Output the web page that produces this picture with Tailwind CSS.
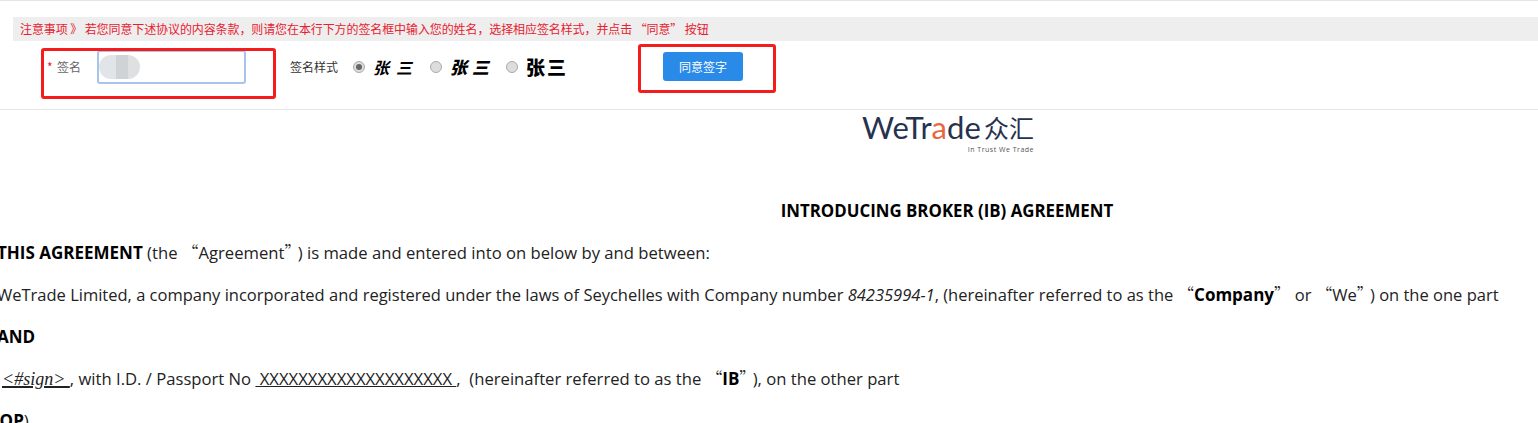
<!DOCTYPE html>
<html lang="zh-CN" class="overflow-hidden h-[423px]">
<head>
  <meta charset="UTF-8">
  <title>IB Agreement</title>
  <script src="https://cdn.jsdelivr.net/npm/@tailwindcss/browser@4"></script>
</head>
<body class="bg-white overflow-hidden h-[423px] font-['Open_Sans','Noto_Sans_CJK_SC',sans-serif]">
  <!-- sign bar -->
  <div class="relative h-[110px] border-t border-b border-[#e6e6e6] pt-4 font-['Noto_Sans_CJK_SC',sans-serif]">
    <div class="ml-[13px] h-6 bg-[#eeeeee] pl-[7px] text-[12px] tracking-[-0.1px] leading-6 text-[#e8202e]">注意事项 》 若您同意下述协议的内容条款，则请您在本行下方的签名框中输入您的姓名，选择相应签名样式，并点击 “同意” 按钮</div>
    <div class="flex items-center h-[52px] pl-[47px] text-[12px] text-[#666]">
      <span class="w-[10px] text-[#e8202e]">*</span>
      <span class="w-[40px]">签名</span>
      <div class="relative w-[149px] h-[34px] border-2 border-[#a9c4ec] rounded-[3px] bg-white">
        <div class="absolute left-0 top-[3px] flex w-[41px] h-6 rounded-full overflow-hidden blur-[0.5px]">
          <span class="w-[17px] bg-[#e2e5e8]"></span>
          <span class="w-[12px] bg-[#d0d3d6]"></span>
          <span class="w-[12px] bg-[#dfe0e2]"></span>
        </div>
      </div>
      <span class="ml-[44px] text-[#333]">签名样式</span>
      <label class="ml-[15px] flex items-center">
        <span class="w-3 h-3 rounded-full border border-[#aaa] bg-[#ddd] flex items-center justify-center"><span class="w-1.5 h-1.5 rounded-full bg-[#666]"></span></span>
        <span class="ml-2 w-[57px] text-[16px] font-bold italic text-black tracking-[7px]">张三</span>
      </label>
      <label class="flex items-center">
        <span class="w-3 h-3 rounded-full border border-[#aaa] bg-[#ddd]"></span>
        <span class="ml-2 w-[56px] text-[17px] font-black italic text-black tracking-[5px]">张三</span>
      </label>
      <label class="flex items-center">
        <span class="w-3 h-3 rounded-full border border-[#aaa] bg-[#ddd]"></span>
        <span class="ml-2 w-[60px] text-[19px] font-black text-black tracking-[2px]">张三</span>
      </label>
      <button class="ml-[77px] -mt-[1px] w-20 h-[29px] rounded-[3px] bg-[#2a8ae8] text-white text-[12px]">同意签字</button>
    </div>
    <!-- annotation boxes -->
    <div class="absolute left-[41px] top-[47px] w-[235px] h-[51px] border-[3px] border-[#f51c1c] rounded-[3px]"></div>
    <div class="absolute left-[638px] top-[43px] w-[138px] h-[49px] border-[3px] border-[#f51c1c] rounded-[3px]"></div>
  </div>

  <!-- logo -->
  <div class="flex justify-center pl-[358px] h-[81px]">
    <div class="flex flex-col items-end w-[172px]">
      <div class="flex items-center h-[34px] mb-[1px] whitespace-nowrap text-[#27324f]">
        <span class="font-['Lato',sans-serif] text-[31px] leading-[34px] tracking-[0.1px]">WeTr<span class="text-[#e8673f]">a</span>de</span>
        <span class="ml-[3px] font-['Noto_Sans_CJK_SC',sans-serif] text-[25px] leading-[34px]">众汇</span>
      </div>
      <div class="text-[7px] leading-[9px] tracking-[0.5px] text-[#555]">In Trust We Trade</div>
    </div>
  </div>

  <!-- agreement -->
  <div class="leading-[42px] text-[#222] whitespace-nowrap">
    <p class="text-center pl-[356px] text-[16.85px] font-bold text-black -mt-[1px]">INTRODUCING BROKER (IB) AGREEMENT</p>
    <p class="-ml-[3px] text-[16.65px]"><b class="text-black text-[17px]">THIS AGREEMENT</b> (the <span class="font-['Noto_Sans_CJK_SC'] font-light leading-[0]">“</span>Agreement<span class="font-['Noto_Sans_CJK_SC'] font-light leading-[0] mr-[5px]">”</span>) is made and entered into on below by and between:</p>
    <p class="-ml-[3px] text-[16.5px]">WeTrade Limited, a company incorporated and registered under the laws of Seychelles with Company number <i>84235994-1</i>, (hereinafter referred to as the <span class="font-['Noto_Sans_CJK_SC'] font-light leading-[0]">“</span><b class="text-black text-[17px]">Company</b><span class="font-['Noto_Sans_CJK_SC'] font-light leading-[0]">”</span> or <span class="font-['Noto_Sans_CJK_SC'] font-light leading-[0]">“</span>We<span class="font-['Noto_Sans_CJK_SC'] font-light leading-[0] mr-[5px]">”</span>) on the one part</p>
    <p class="-ml-[3px] text-[17px]"><b class="text-black">AND</b></p>
    <p class="ml-[2px] text-[16.65px]"><u class="font-['Liberation_Serif'] italic text-[18px] leading-[0] decoration-2">&lt;#sign&gt; </u>, with I.D. / Passport No <u>&nbsp;XXXXXXXXXXXXXXXXXXXX&nbsp;</u>, &nbsp;(hereinafter referred to as the <span class="font-['Noto_Sans_CJK_SC'] font-light leading-[0]">“</span><b class="text-black text-[17px]">IB</b><span class="font-['Noto_Sans_CJK_SC'] font-light leading-[0] mr-[5px]">”</span>), on the other part</p>
    <p class="-ml-[16px] text-[17px]"><b class="text-black">(TOP</b>)</p>
  </div>
</body>
</html>
